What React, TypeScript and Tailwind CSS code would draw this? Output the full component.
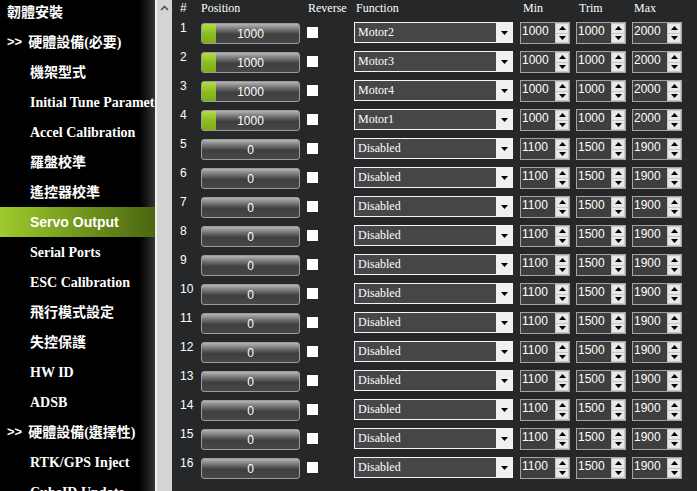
import React from "react";

interface ServoRow {
  pos: number;
  fn: string;
  min: number;
  trim: number;
  max: number;
}

const navItems: { label: string; level: "top" | "group" | "item"; active?: boolean }[] = [
  { label: "韌體安裝", level: "top" },
  { label: "硬體設備(必要)", level: "group" },
  { label: "機架型式", level: "item" },
  { label: "Initial Tune Parameter", level: "item" },
  { label: "Accel Calibration", level: "item" },
  { label: "羅盤校準", level: "item" },
  { label: "遙控器校準", level: "item" },
  { label: "Servo Output", level: "item", active: true },
  { label: "Serial Ports", level: "item" },
  { label: "ESC Calibration", level: "item" },
  { label: "飛行模式設定", level: "item" },
  { label: "失控保護", level: "item" },
  { label: "HW ID", level: "item" },
  { label: "ADSB", level: "item" },
  { label: "硬體設備(選擇性)", level: "group" },
  { label: "RTK/GPS Inject", level: "item" },
  { label: "CubeID Update", level: "item" },
];

const motors = ["Motor2", "Motor3", "Motor4", "Motor1"];

const rows: ServoRow[] = Array.from({ length: 16 }, (_, i) =>
  i < 4
    ? { pos: 1000, fn: motors[i], min: 1000, trim: 1000, max: 2000 }
    : { pos: 0, fn: "Disabled", min: 1100, trim: 1500, max: 1900 }
);

const serif = "font-['Liberation_Serif','Noto_Sans_CJK_TC',serif]";
const sans = "font-['Liberation_Sans',sans-serif]";

const Tri: React.FC<{ up?: boolean }> = ({ up }) => (
  <svg width="7" height="4" viewBox="0 0 7 4">
    <polygon points={up ? "0,4 7,4 3.5,0" : "0,0 7,0 3.5,4"} fill="#000" />
  </svg>
);

const Spin: React.FC<{ value: number }> = ({ value }) => (
  <div className="flex h-[22px] w-[50px] border border-[#a3a3a3] bg-[#3e3e3e]">
    <span className={`${sans} flex-1 pl-[1px] text-[12px] leading-[16px] text-white`}>
      {value}
    </span>
    <div className="flex w-[14px] flex-col gap-[1px] bg-[#c8c8c8] p-[1px]">
      <div className="flex flex-1 items-center justify-center bg-[#e8e8e8]">
        <Tri up />
      </div>
      <div className="flex flex-1 items-center justify-center bg-[#e8e8e8]">
        <Tri />
      </div>
    </div>
  </div>
);

const App: React.FC = () => {
  return (
    <div className="flex h-[491px] w-[697px] overflow-hidden bg-[#262729]">
      {/* side menu */}
      <div className="w-[155px] shrink-0 overflow-hidden bg-gradient-to-r from-black from-[86%] to-[#353535]">
        <div className="-mt-[3px] flex flex-col">
          {navItems.map((item) => (
            <div
              key={item.label}
              className={`flex h-[30px] items-center whitespace-nowrap text-[14px] font-bold text-white ${
                item.active
                  ? "bg-gradient-to-r from-[#9fcb2c] to-[#4c6710]"
                  : ""
              } ${item.level === "item" ? "pl-[30px]" : "pl-[7px]"}`}
            >
              {item.level === "group" && (
                <span className={`${sans} mr-[6px] text-[13px]`}>&gt;&gt;</span>
              )}
              <span className={item.active ? sans : serif}>{item.label}</span>
            </div>
          ))}
        </div>
      </div>

      {/* scrollbar */}
      <div className="flex w-[17px] shrink-0 justify-center border-l-2 border-[#efefef] bg-[#d4d4d4] pt-[5px]">
        <svg width="9" height="6" viewBox="0 0 9 6">
          <path d="M1 5 L4.5 1.5 L8 5" fill="none" stroke="#505050" strokeWidth="1.6" />
        </svg>
      </div>

      {/* servo table */}
      <div className="flex-1 pl-[8px] text-white">
        <div
          className={`${serif} grid h-[20px] grid-cols-[21px_106px_47px_166px_56px_56px_50px] text-[12px] leading-[16px]`}
        >
          <span className={sans}>#</span>
          <span>Position</span>
          <span className="pl-[1px]">Reverse</span>
          <span className="pl-[2px]">Function</span>
          <span className="pl-[3px]">Min</span>
          <span className="pl-[3px]">Trim</span>
          <span className="pl-[2px]">Max</span>
        </div>

        {rows.map((r, i) => (
          <div
            key={i}
            className="grid h-[29px] grid-cols-[21px_106px_47px_166px_56px_56px_50px]"
          >
            <span className={`${sans} pt-[1px] text-[12px] leading-[14px]`}>{i + 1}</span>

            <div className="pt-[3px]">
              <div className="relative flex h-[21px] w-[99px] items-center justify-center overflow-hidden rounded-[3px] border border-[#9c9c9c] bg-gradient-to-b from-[#b4b4b4] via-[#3f3f3f] via-[55%] to-[#474747]">
                {r.pos > 0 && (
                  <div className="absolute inset-y-0 left-0 w-[14px] bg-gradient-to-b from-[#b5dc48] via-[#8cbc1e] to-[#7eae18]" />
                )}
                <span className={`${sans} relative text-[12px] text-white`}>{r.pos}</span>
              </div>
            </div>

            <div className="pt-[7px]">
              <div className="h-[11px] w-[11px] bg-white" />
            </div>

            <div className="pt-[2px]">
              <div className="flex h-[21px] w-[159px] border border-[#f4f4f4] bg-[#464648]">
                <span className={`${serif} flex-1 pl-[3px] text-[12px] leading-[18px] text-white`}>
                  {r.fn}
                </span>
                <div className="flex w-[16px] items-center justify-center bg-[#f0f0f0]">
                  <Tri />
                </div>
              </div>
            </div>

            <div className="pt-[2px]">
              <Spin value={r.min} />
            </div>
            <div className="pt-[2px]">
              <Spin value={r.trim} />
            </div>
            <div className="pt-[2px]">
              <Spin value={r.max} />
            </div>
          </div>
        ))}
      </div>
    </div>
  );
};

export default App;
